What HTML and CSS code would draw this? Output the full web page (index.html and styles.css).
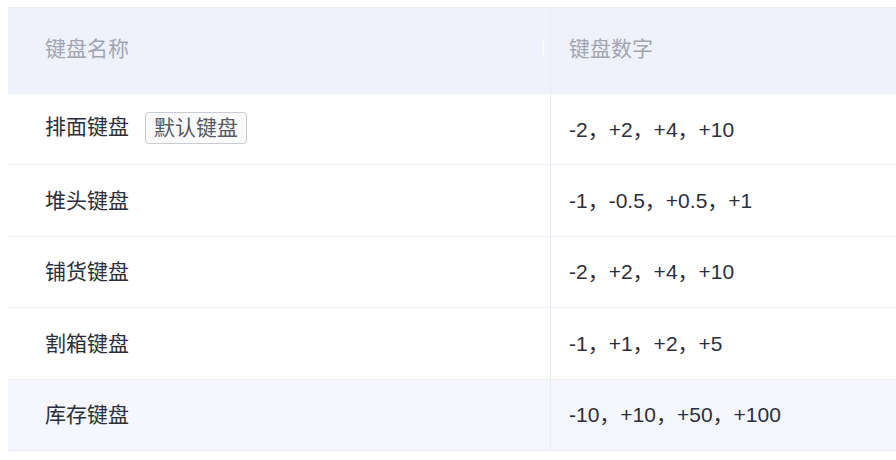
FILE: index.html
```html
<!DOCTYPE html>
<html><head><meta charset="utf-8"/>
<title>键盘设置</title>
<link rel="stylesheet" href="styles.css">
</head>
<body>
<table class="kb-table">
  <tr class="kb-head">
    <th class="col-name">键盘名称<span class="resize"></span></th>
    <th class="col-num">键盘数字</th>
  </tr>
  <tr>
    <td class="col-name">排面键盘<span class="tag">默认键盘</span></td>
    <td class="col-num">-2，+2，+4，+10</td>
  </tr>
  <tr>
    <td class="col-name">堆头键盘</td>
    <td class="col-num">-1，-0.5，+0.5，+1</td>
  </tr>
  <tr>
    <td class="col-name">铺货键盘</td>
    <td class="col-num">-2，+2，+4，+10</td>
  </tr>
  <tr>
    <td class="col-name">割箱键盘</td>
    <td class="col-num">-1，+1，+2，+5</td>
  </tr>
  <tr class="hover">
    <td class="col-name">库存键盘</td>
    <td class="col-num">-10，+10，+50，+100</td>
  </tr>
</table>
</body>
</html>
```

FILE: styles.css
```css
body {
  margin: 7px 0 0 8px;
  overflow: hidden;
  font-family: "Liberation Sans", "Noto Sans CJK SC", sans-serif;
  font-size: 21px;
  color: #2b2f3b;
}
.kb-table {
  border-collapse: collapse;
  width: 1100px;
  border-top: 1px solid #e9ecf2;
}
.kb-table th,
.kb-table td {
  text-align: left;
  font-weight: normal;
  border-bottom: 1px solid #e9ecf2;
  padding: 0;
}
.kb-head th {
  height: 78px;
  padding-bottom: 7px !important;
  background-color: #eff2fb;
  color: #a1a6b2;
  position: relative;
}
.kb-table td {
  height: 67.4px;
  padding-bottom: 3px !important;
}
.col-name {
  width: 505px;
  padding-left: 37px !important;
}
.col-num {
  border-left: 1px solid #e9ecf2;
  padding-left: 18px !important;
}
.resize {
  position: absolute;
  right: 6px;
  top: 31px;
  width: 2px;
  height: 18px;
  background: #fff;
  opacity: .6;
}
.tag {
  display: inline-block;
  margin-left: 16px;
  padding: 0 8px;
  line-height: 30px;
  border: 1px solid #c9ccd2;
  border-radius: 4px;
  background: #fafafa;
  color: #555a64;
  vertical-align: middle;
  position: relative;
  top: -1px;
}
.hover td {
  background-color: #f5f7fc;
}
```
